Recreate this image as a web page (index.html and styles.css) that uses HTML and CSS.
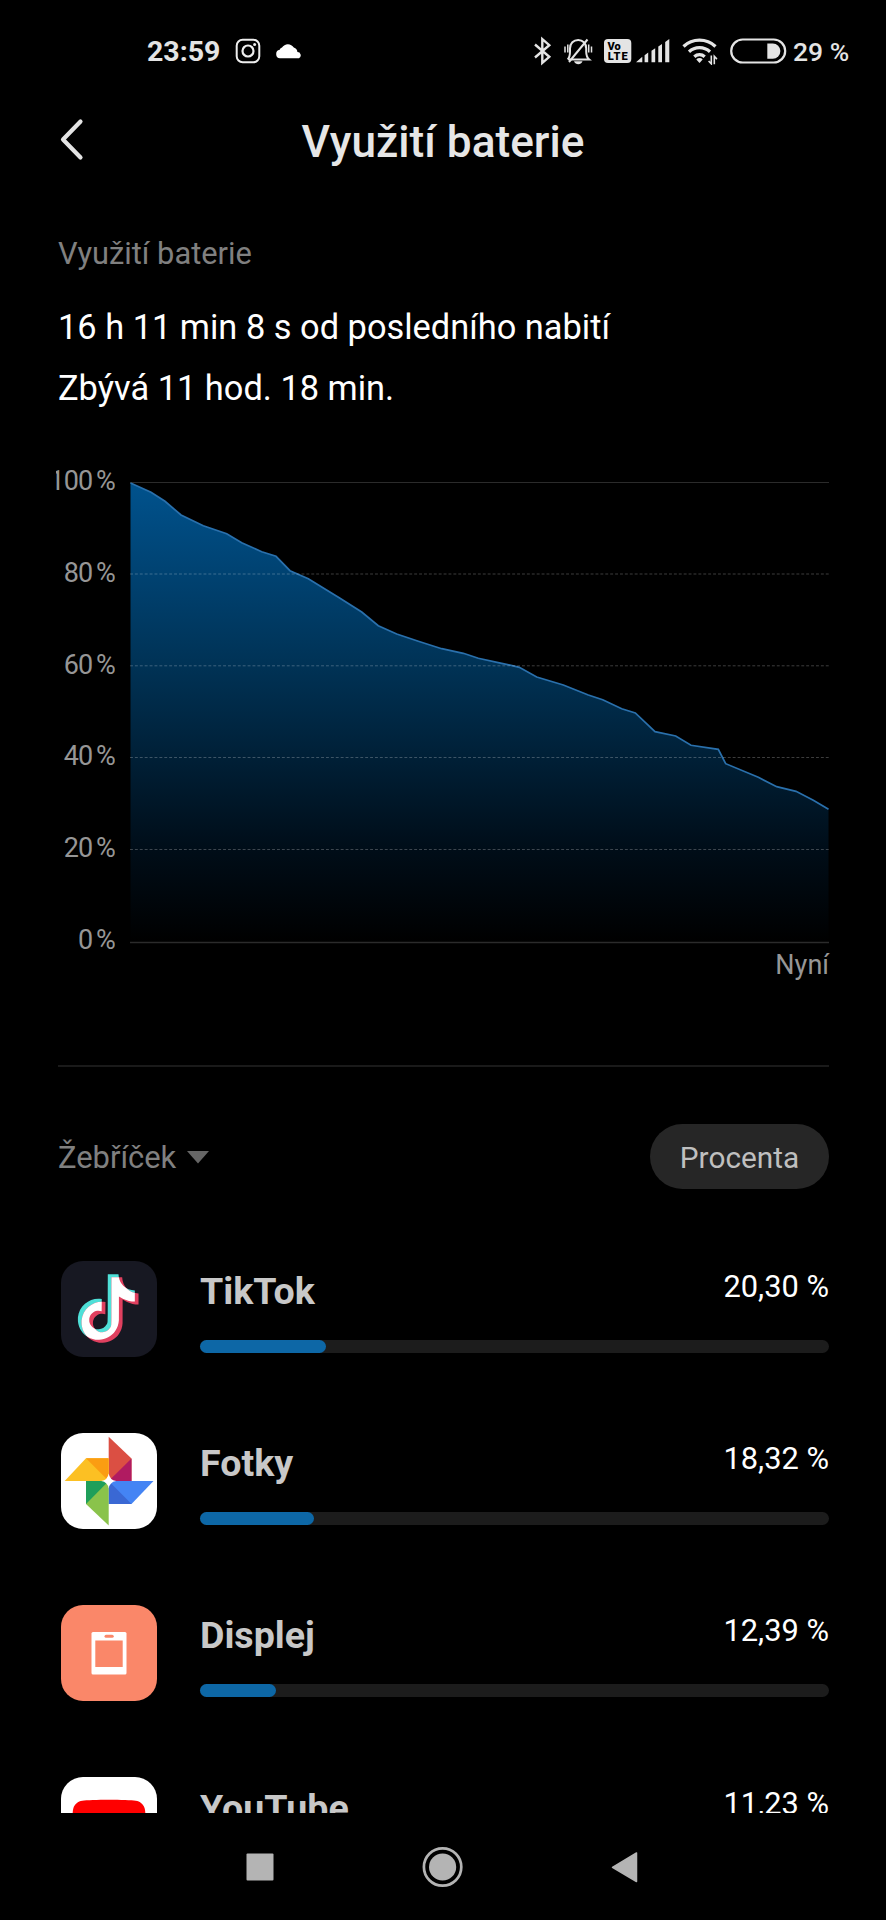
FILE: index.html
```html
<!DOCTYPE html>
<html lang="cs">

<head>
	<meta charset="UTF-8" />
	<meta name="viewport" content="width=device-width, initial-scale=1.0" />
	<title>Využití baterie</title>
	<link rel="stylesheet" href="styles.css">
</head>

<body>
	<div class="screen">
		<!-- status bar -->
		<div class="status-bar">
			<span class="time">23:59</span>
			<svg class="ico-instagram" width="26" height="26" viewBox="0 0 26 26" fill="none" stroke="#eee">
				<rect x="1.7" y="1.7" width="22.6" height="22.6" rx="6" stroke-width="2" />
				<circle cx="13" cy="13" r="5.5" stroke-width="2.2" />
				<circle cx="19.6" cy="6.4" r="1.5" fill="#eee" stroke="none" />
			</svg>
			<svg class="ico-cloud" width="28" height="16" viewBox="0 0 28 16">
				<path d="M5 15.3a4.3 4.3 0 0 1-.3-8.5A3.5 3.5 0 0 1 7 4.6 7 7 0 0 1 18.8 4.5a5 5 0 0 1 3.6 4.6A3.3 3.3 0 0 1 24 15.3z" fill="#fff" />
			</svg>
			<div class="status-right">
				<svg class="ico-bt" width="20" height="30" viewBox="0 0 20 30" fill="none" stroke="#e4e4e4" stroke-width="2.4">
					<path d="M2 8.5L16.3 20.8 9.3 26.8V3.2l7 6L2 21.5" />
				</svg>
				<svg class="ico-bell" width="30" height="30" viewBox="0 0 30 30" fill="none" stroke="#e4e4e4" stroke-width="2">
					<path d="M5.500 23.500h20.700c-2.400-2-3-4-3-8V12.500c0-5.200-3.500-8.500-8-8.500-4.700 0-8.200 3.300-8.200 8.500v3c0 3.800-.3 5.800-2.300 8" />
					<path d="M6 26L24.5 3.5" />
					<path d="M2 10.5v6M4.8 8.5v8M25.7 8.5v8M28.5 10.5v6" stroke-width="1.5" />
					<path d="M11 25.3h8.500c-1 2.300-2.300 2.900-4.200 2.900s-3.300-.6-4.300-2.900z" fill="#e4e4e4" stroke="none" />
				</svg>
				<svg class="ico-volte" width="28" height="24" viewBox="0 0 28 24">
					<rect x="0" y="0" width="27.3" height="24" rx="4" fill="#e4e4e4" />
					<text x="3.5" y="10.5" class="volte-text">Vo</text>
					<text x="3.7" y="21.3" class="volte-text" textLength="20">LTE</text>
				</svg>
				<svg class="ico-signal" width="35" height="24" viewBox="0 0 35 24" fill="#e4e4e4">
					<path d="M0 23.3l6.3-5.5v5.500zM8.600 16.300l3.600-2.800v9.800H8.600zM15.500 11.700l3.700-2.400v14h-3.700zM22.300 7.600l3.700-2.500v18.200h-3.700zM29.200 3.100L33.300 0v23.300h-4.100z" />
				</svg>
				<svg class="ico-wifi" width="36" height="28" viewBox="0 0 36 28" fill="none" stroke="#e4e4e4" stroke-width="3.3">
					<path d="M1.5 9.5a23.500 23.500 0 0 1 32 0M7 14.800a15.500 15.500 0 0 1 21 0M12.300 19.700a7.800 7.800 0 0 1 10.400 0" />
					<path d="M14.300 22.400a4.500 4.500 0 0 1 6.400 0l-3.200 3.700z" fill="#e4e4e4" stroke="none" />
					<path d="M29.300 18.600v8.200l-2.700-2.800M32.300 27.300v-8l2.600 2.800" stroke-width="1.6" />
				</svg>
				<svg class="ico-battery" width="57" height="26" viewBox="0 0 57 26">
					<rect x="1.2" y="1.5" width="54" height="23" rx="11.5" fill="none" stroke="#e4e4e4" stroke-width="2.2" />
					<path d="M37.3 5.500h5.500a7.600 7.600 0 0 1 0 15.200h-5.500z" fill="#e4e4e4" />
				</svg>
				<span class="battery-level">29 %</span>
			</div>
		</div>

		<!-- header -->
		<div class="header">
			<svg class="back" width="26" height="44" viewBox="0 0 26 44" fill="none" stroke="#e4e4e4" stroke-width="4.2" stroke-linecap="round" stroke-linejoin="round">
				<path d="M22.5 3.5L5 21.5l17.5 18" />
			</svg>
			<h1 class="title">Využití baterie</h1>
		</div>

		<div class="content">
			<div class="subtitle">Využití baterie</div>
			<div class="summary">
				<div class="summary-line">16 h 11 min 8 s od posledního nabití</div>
				<div class="summary-line">Zbývá 11 hod. 18 min.</div>
			</div>

			<!-- chart -->
			<div class="chart">
				<div class="axis">
					<span>100 %</span>
					<span>80 %</span>
					<span>60 %</span>
					<span>40 %</span>
					<span>20 %</span>
					<span>0 %</span>
				</div>
				<svg class="plot" width="699" height="462" viewBox="130 482 699 462" fill="none">
					<defs>
						<linearGradient id="fill" x1="0" y1="0" x2="0" y2="1">
							<stop offset="0" stop-color="#00528d" />
							<stop offset="0.4" stop-color="#003255" />
							<stop offset="0.8" stop-color="#000d18" />
							<stop offset="1" stop-color="#000" />
						</linearGradient>
					</defs>
					<path d="M130 482.5H829" stroke="#2b2b2b" />
					<path d="M130.500 483L151 492.300 165 501.300 181 515 203.300 525.700 226.700 533.700 241.700 542.700 261.700 551.700 276 556.300 290 570.700 308.300 578.700 340 598.300 361.700 612 378.300 625.700 396.700 634 418.300 641.300 441.700 648.700 463.300 653.300 478.300 658.300 501.700 663.300 519.300 667.300 536.700 677 563.300 685 588.300 695 602.700 699.700 621.700 708.700 635.300 713 655 731.700 675.700 736 691 745.300 718.300 749.300 725.700 763.700 758.300 777.300 776.700 786.700 796 791.300 813.300 800.300 828.500 809.300V942H130.500z" fill="url(#fill)" />
					<path d="M130.500 483L151 492.300 165 501.300 181 515 203.300 525.700 226.700 533.700 241.700 542.700 261.700 551.700 276 556.300 290 570.700 308.300 578.700 340 598.300 361.700 612 378.300 625.700 396.700 634 418.300 641.300 441.700 648.700 463.300 653.300 478.300 658.300 501.700 663.300 519.300 667.300 536.700 677 563.300 685 588.300 695 602.700 699.700 621.700 708.700 635.300 713 655 731.700 675.700 736 691 745.300 718.300 749.300 725.700 763.700 758.300 777.300 776.700 786.700 796 791.300 813.300 800.300 828.500 809.300" stroke="#2a70ac" stroke-width="1.7" />
					<path d="M130 574H829M130 665.8H829M130 757.5H829M130 849.5H829" stroke="#fff" stroke-opacity=".24" stroke-dasharray="2.9 2" />
					<path d="M130 942.5H829" stroke="#2b2b2b" stroke-width="1.6" />
				</svg>
			</div>
			<div class="now">Nyní</div>
			<div class="divider"></div>

			<div class="toolbar">
				<div class="sort">
					Žebříček
					<svg width="22" height="13" viewBox="0 0 22 13"><path d="M0 0h22L11 12.5z" fill="#666" /></svg>
				</div>
				<div class="pill">Procenta</div>
			</div>
		</div>

		<!-- app list -->
		<div class="list">
			<div class="item">
				<svg class="icon" viewBox="0 0 96 96">
					<defs>
						<path id="note" d="M12.525.02c1.31-.02 2.61-.01 3.91-.02.08 1.53.63 3.09 1.75 4.17 1.12 1.11 2.7 1.62 4.24 1.79v4.03c-1.44-.05-2.89-.35-4.2-.97-.57-.26-1.1-.59-1.62-.93-.01 2.92.01 5.84-.02 8.75-.08 1.4-.54 2.79-1.35 3.94-1.31 1.92-3.58 3.17-5.91 3.21-1.43.08-2.86-.31-4.08-1.03-2.02-1.19-3.44-3.37-3.65-5.71-.02-.5-.03-1-.01-1.49.18-1.9 1.12-3.72 2.58-4.96 1.66-1.44 3.98-2.13 6.15-1.72.02 1.48-.04 2.96-.04 4.44-.99-.32-2.15-.23-3.02.37-.63.41-1.11 1.04-1.36 1.75-.21.51-.15 1.07-.14 1.61.24 1.64 1.82 3.02 3.5 2.87 1.12-.01 2.19-.66 2.77-1.61.19-.33.4-.67.41-1.06.1-1.79.06-3.57.07-5.36.01-4.03-.01-8.05.02-12.07z" />
						<clipPath id="note-clip"><use href="#note" transform="translate(16.3 16.3) scale(2.73)" /></clipPath>
					</defs>
					<rect width="96" height="96" rx="22" fill="#171822" />
					<use href="#note" transform="translate(12.6 13.3) scale(2.73)" fill="#4fe0d8" />
					<use href="#note" transform="translate(16.3 16.3) scale(2.73)" fill="#e0405f" />
					<g clip-path="url(#note-clip)">
						<use href="#note" transform="translate(12.6 13.3) scale(2.73)" fill="#fff" />
					</g>
				</svg>
				<div class="info">
					<div class="labels"><span class="name">TikTok</span><span class="value">20,30 %</span></div>
					<div class="bar"><div class="bar-fill" style="width: 20.1%"></div></div>
				</div>
			</div>

			<div class="item">
				<svg class="icon" viewBox="0 0 96 96">
					<rect width="96" height="96" rx="22" fill="#fff" />
					<path d="M47.7 3.7l22.8 21.8V48H47.7z" fill="#db4f43" />
					<path d="M70.5 25.5V48H47.7z" fill="#b01b61" />
					<path d="M92.5 48L70.5 71H47.7V48z" fill="#4484f4" />
					<path d="M47.7 48l22.8 23H47.7z" fill="#3a68d4" />
					<path d="M47.7 92.5L25 71V48h22.7z" fill="#8ac34b" />
					<path d="M25 48h22.7L25 71z" fill="#1f9f5a" />
					<path d="M3.7 48L25 25.3h22.7V48z" fill="#fcc023" />
					<path d="M25 25.3h22.7V48z" fill="#fb9d12" />
					<path d="M47.700 40.500q1 6.500 7.500 7.500-6.500 1-7.500 7.500-1-6.500-7.500-7.500 6.500-1 7.500-7.500z" fill="#fff" />
				</svg>
				<div class="info">
					<div class="labels"><span class="name">Fotky</span><span class="value">18,32 %</span></div>
					<div class="bar"><div class="bar-fill" style="width: 18.05%"></div></div>
				</div>
			</div>

			<div class="item">
				<svg class="icon" viewBox="0 0 96 96">
					<rect width="96" height="96" rx="22" fill="#fa8769" />
					<rect x="30.5" y="27" width="35" height="42.5" rx="1.5" fill="#fff" />
					<rect x="34.3" y="35.5" width="27.4" height="26.5" fill="#fa8769" />
					<rect x="43.5" y="29.8" width="9.2" height="3" rx="1.5" fill="#fa8769" />
				</svg>
				<div class="info">
					<div class="labels"><span class="name">Displej</span><span class="value">12,39 %</span></div>
					<div class="bar"><div class="bar-fill" style="width: 12.1%"></div></div>
				</div>
			</div>

			<div class="item">
				<svg class="icon" viewBox="0 0 96 96">
					<rect width="96" height="96" rx="22" fill="#fff" />
					<path d="M11.500 48c0-10 0-13 .8-16.500 1.300-4.500 4.700-7 9-7.700 8-1.300 45.400-1.300 53.400 0 4.300.7 7.700 3.200 9 7.700.8 3.500.8 6.500.8 16.500s0 13-.8 16.500c-1.300 4.500-4.700 7-9 7.700-8 1.300-45.400 1.300-53.400 0-4.300-.7-7.700-3.200-9-7.700-.8-3.500-.8-6.500-.8-16.500z" fill="#f00" />
					<path d="M40 37.500L59 48 40 58.500z" fill="#fff" />
				</svg>
				<div class="info">
					<div class="labels"><span class="name">YouTube</span><span class="value">11,23 %</span></div>
					<div class="bar"><div class="bar-fill" style="width: 11%"></div></div>
				</div>
			</div>
		</div>

		<!-- navigation -->
		<div class="nav-bar">
			<svg width="42" height="42" viewBox="0 0 42 42"><rect x="7.5" y="7.5" width="27" height="27" rx="1" fill="#b4b4b4" /></svg>
			<svg width="42" height="42" viewBox="0 0 42 42">
				<circle cx="20.600" cy="21" r="18.7" fill="none" stroke="#b4b4b4" stroke-width="2.7" />
				<circle cx="20.600" cy="21" r="13.6" fill="#b4b4b4" />
			</svg>
			<svg width="42" height="42" viewBox="0 0 42 42"><path d="M7.500 21.300L31.500 7v28.500z" fill="#b4b4b4" stroke="#b4b4b4" stroke-width="1.5" stroke-linejoin="round" /></svg>
		</div>
	</div>
</body>

</html>
```

FILE: styles.css
```css
* {
	box-sizing: border-box;
}

body {
	margin: 0;
	background: #000;
	color: #fff;
	font-family: Roboto, "Noto Sans", sans-serif;
}

svg {
	display: block;
	flex: none;
}

.screen {
	display: flex;
	flex-direction: column;
	width: 886px;
	height: 1920px;
	overflow: hidden;
	white-space: nowrap;
}

/* status bar */
.status-bar {
	display: flex;
	align-items: center;
	height: 102px;
	padding: 0 38px 0 147px;
	color: #e4e4e4;
}

.time {
	width: 88px;
	padding-top: 1px;
	font-size: 28.5px;
	font-weight: 700;
}

.ico-cloud {
	margin-left: 14px;
}

.status-right {
	display: flex;
	align-items: center;
	margin-left: auto;
}

.ico-bell {
	margin-left: 10px;
}

.ico-volte {
	margin-left: 11px;
}

.volte-text {
	font-size: 11px;
	font-weight: 900;
}

.ico-signal {
	margin-left: 4px;
}

.ico-wifi {
	margin-left: 11px;
}

.ico-battery {
	margin-left: 12px;
}

.battery-level {
	width: 55px;
	margin-left: 6px;
	font-size: 26.5px;
	font-weight: 500;
}

/* header */
.header {
	display: grid;
	grid-template-columns: 1fr auto 1fr;
	align-items: center;
	height: 80px;
	padding: 0 58px;
}

.back {
	margin-bottom: 4px;
}

.title {
	margin: 0 0 1px;
	color: #e6e6e6;
	font-size: 44.2px;
	font-weight: 500;
	line-height: 60px;
}

.content {
	padding: 51.5px 57px 0 58px;
}

.subtitle {
	color: #808080;
	font-size: 30.8px;
	line-height: 40px;
}

.summary {
	margin-top: 23.5px;
	font-size: 34.4px;
	line-height: 60.5px;
}

/* chart */
.chart {
	display: flex;
	margin: 48px 0 0 -2px;
}

.axis {
	display: flex;
	flex-direction: column;
	justify-content: space-between;
	align-items: flex-end;
	width: 59px;
	height: 489px;
	overflow: hidden;
	color: #969696;
	font-size: 27px;
	line-height: 30px;
	letter-spacing: -0.9px;
	word-spacing: -2px;
}

.plot {
	margin: 16px 0 0 15px;
}

.now {
	margin-top: -5px;
	color: #969696;
	font-size: 27px;
	line-height: 30px;
	text-align: right;
}

.divider {
	height: 2px;
	margin-top: 85px;
	background: #1a1a1a;
}

.toolbar {
	display: flex;
	justify-content: space-between;
	align-items: center;
	margin-top: 57px;
}

.sort {
	display: flex;
	align-items: center;
	gap: 11px;
	padding-top: 2px;
	color: #808080;
	font-size: 30.9px;
}

.pill {
	width: 179px;
	height: 65px;
	padding-top: 1px;
	border-radius: 33px;
	background: #262626;
	color: #bfbfbf;
	font-size: 29.8px;
	line-height: 65px;
	text-align: center;
}

/* app list */
.list {
	flex: 1;
	min-height: 0;
	padding: 71.5px 57px 0 61px;
	overflow: hidden;
}

.item {
	display: flex;
	height: 172.2px;
}

.icon {
	width: 96px;
	height: 96px;
}

.info {
	flex: 1;
	margin-left: 43px;
	padding-top: 8.5px;
}

.labels {
	display: flex;
	justify-content: space-between;
}

.name {
	color: #c8c8c8;
	font-size: 37.6px;
	font-weight: 700;
	line-height: 44px;
}

.value {
	font-size: 30.8px;
	line-height: 35px;
}

.bar {
	height: 13px;
	margin-top: 27px;
	border-radius: 7px;
	background: #1c1c1c;
}

.bar-fill {
	height: 100%;
	border-radius: 7px;
	background: #0d67a6;
}

/* navigation */
.nav-bar {
	display: flex;
	justify-content: center;
	align-items: center;
	gap: 141px;
	height: 107px;
}
```
